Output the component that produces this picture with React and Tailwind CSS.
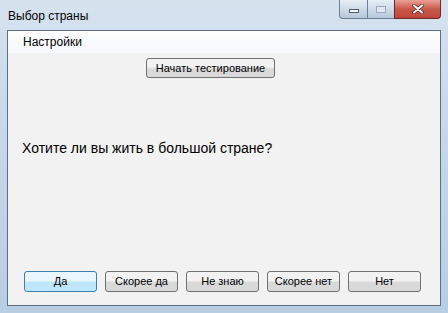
export default function App() {
  const btn =
    "h-[21px] w-[73px] rounded-[3px] border border-[#707070] bg-gradient-to-b from-[#f2f2f2] from-45% to-[#d9d9d9] to-55% text-[11px] text-black flex items-center justify-center";
  return (
    <div
      className="w-[448px] h-[313px] flex flex-col px-[7px] pb-[7px] bg-gradient-to-b from-[#d6e2ee] via-[#c5d6e8] to-[#b9cde2] overflow-hidden"
      style={{ fontFamily: '"Liberation Sans", Arial, sans-serif' }}
    >
      {/* title bar */}
      <div className="h-[30px] flex items-start relative">
        <div className="pt-[7px] pl-[1px] text-[12px] text-black">Выбор страны</div>
        <div className="absolute right-0 top-0 flex h-[19px]">
          <div className="w-[29px] h-[19px] rounded-bl-[4px] border border-[#6d7f96] border-t-0 bg-gradient-to-b from-[#e6eef6] to-[#b7c8da] flex items-center justify-center">
            <div className="w-[10px] h-[4px] bg-white border border-[#475a72] mt-[4px]" />
          </div>
          <div className="w-[26px] h-[19px] border-b border-[#6d7f96] bg-gradient-to-b from-[#e6eef6] to-[#b7c8da] flex items-center justify-center">
            <div className="w-[10px] h-[7px] border border-[#9aaabd] bg-[#dfe7f0]" />
          </div>
          <div className="w-[47px] h-[19px] rounded-br-[4px] border border-[#6b2a2a] border-t-0 bg-gradient-to-b from-[#e8a197] via-[#c9594c] to-[#c1443a] flex items-center justify-center">
            <svg width="12" height="10" viewBox="0 0 12 10">
              <path d="M2 1.5 L10 8.5 M10 1.5 L2 8.5" stroke="#4a1a18" strokeWidth="3.4" strokeLinecap="round" />
              <path d="M2 1.5 L10 8.5 M10 1.5 L2 8.5" stroke="#ffffff" strokeWidth="2.2" strokeLinecap="round" />
            </svg>
          </div>
        </div>
      </div>
      {/* client area */}
      <div className="flex-1 border border-[#5d6f85] bg-[#f2f2f2] flex flex-col">
        <div className="h-[22px] bg-gradient-to-b from-[#ffffff] to-[#f6f8fb] flex items-center pl-[15px] text-[12px] text-black">
          Настройки
        </div>
        <div className="flex-1 flex flex-col">
          <div className="mt-[5px] ml-[138px]">
            <div className="h-[20px] w-[129px] rounded-[3px] border border-[#707070] bg-gradient-to-b from-[#f2f2f2] from-45% to-[#d9d9d9] to-55% text-[11px] text-black flex items-center justify-center">
              Начать тестирование
            </div>
          </div>
          <div className="mt-[60px] ml-[14px] text-[14px] text-black">
            Хотите ли вы жить в большой стране?
          </div>
          <div className="mt-auto mb-[13px] ml-[16px] flex gap-[8px]">
            <div className="h-[21px] w-[73px] rounded-[3px] border border-[#3c7fb1] bg-gradient-to-b from-[#eaf6fd] from-45% to-[#bee6fd] to-55% text-[11px] text-black flex items-center justify-center">
              Да
            </div>
            <div className={btn}>Скорее да</div>
            <div className={btn}>Не знаю</div>
            <div className={btn}>Скорее нет</div>
            <div className={btn}>Нет</div>
          </div>
        </div>
      </div>
    </div>
  );
}
